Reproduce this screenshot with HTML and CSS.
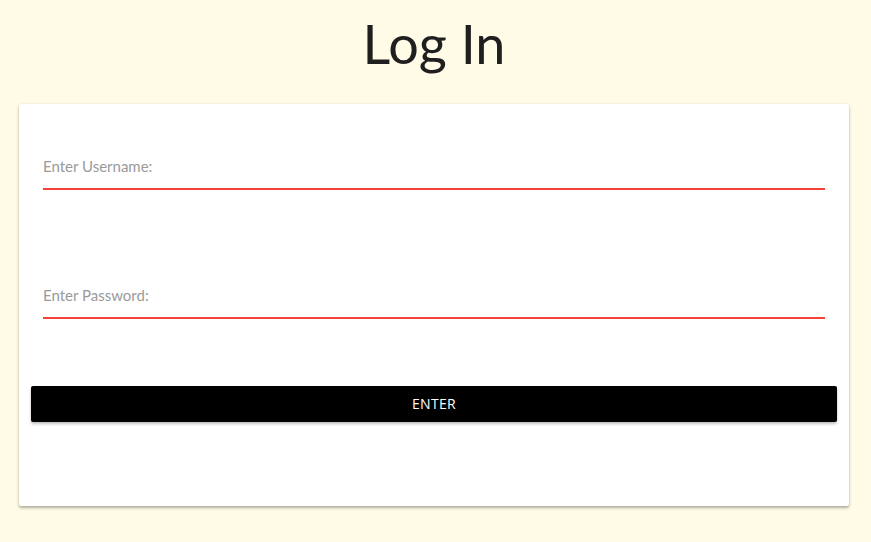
FILE: index.html
```html
<!DOCTYPE html>
<html>
<head>
<meta charset="utf-8">
<link rel="stylesheet" href="styles.css">
</head>
<body>
<main class="page">
  <h1 class="title">Log In</h1>
  <form class="card">
    <label class="field">
      <span class="field-label">Enter Username:</span>
    </label>
    <label class="field field-second">
      <span class="field-label">Enter Password:</span>
    </label>
    <button type="button" class="enter">ENTER</button>
  </form>
</main>
</body>
</html>
```
FILE: styles.css
```css
html, body {
  margin: 0;
  padding: 0;
  background: #fffbe7;
}
.page {
  padding: 0 22px 20px 19px;
  display: flex;
  flex-direction: column;
}
.title {
  margin: 0;
  padding-top: 11px;
  height: 104px;
  box-sizing: border-box;
  text-align: center;
  font-family: Lato, "Noto Sans", sans-serif;
  font-weight: 400;
  font-size: 54px;
  line-height: 66px;
  color: #1f1f1f;
}
.card {
  background: #fff;
  height: 402px;
  box-sizing: border-box;
  box-shadow: 0 2px 3px rgba(0,0,0,0.3), 0 0 2px rgba(0,0,0,0.1);
  border-radius: 2px;
  padding: 52px 12px 0 12px;
  display: flex;
  flex-direction: column;
}
.field {
  margin: 0 12px;
  height: 32px;
  border-bottom: 2px solid #f44336;
  display: flex;
  align-items: flex-start;
}
.field-second {
  margin-top: 95px;
}
.field-label {
  font-family: Lato, "Noto Sans", sans-serif;
  font-size: 15px;
  color: #9a9a9a;
  line-height: 20px;
}
.enter {
  margin-top: 67px;
  height: 36px;
  background: #000;
  color: #fff;
  border: none;
  border-radius: 2px;
  box-shadow: 0 2px 3px rgba(0,0,0,0.25);
  font-family: "Open Sans", sans-serif;
  font-size: 14px;
  line-height: 34px;
  letter-spacing: 0.3px;
  padding: 0;
}
```
